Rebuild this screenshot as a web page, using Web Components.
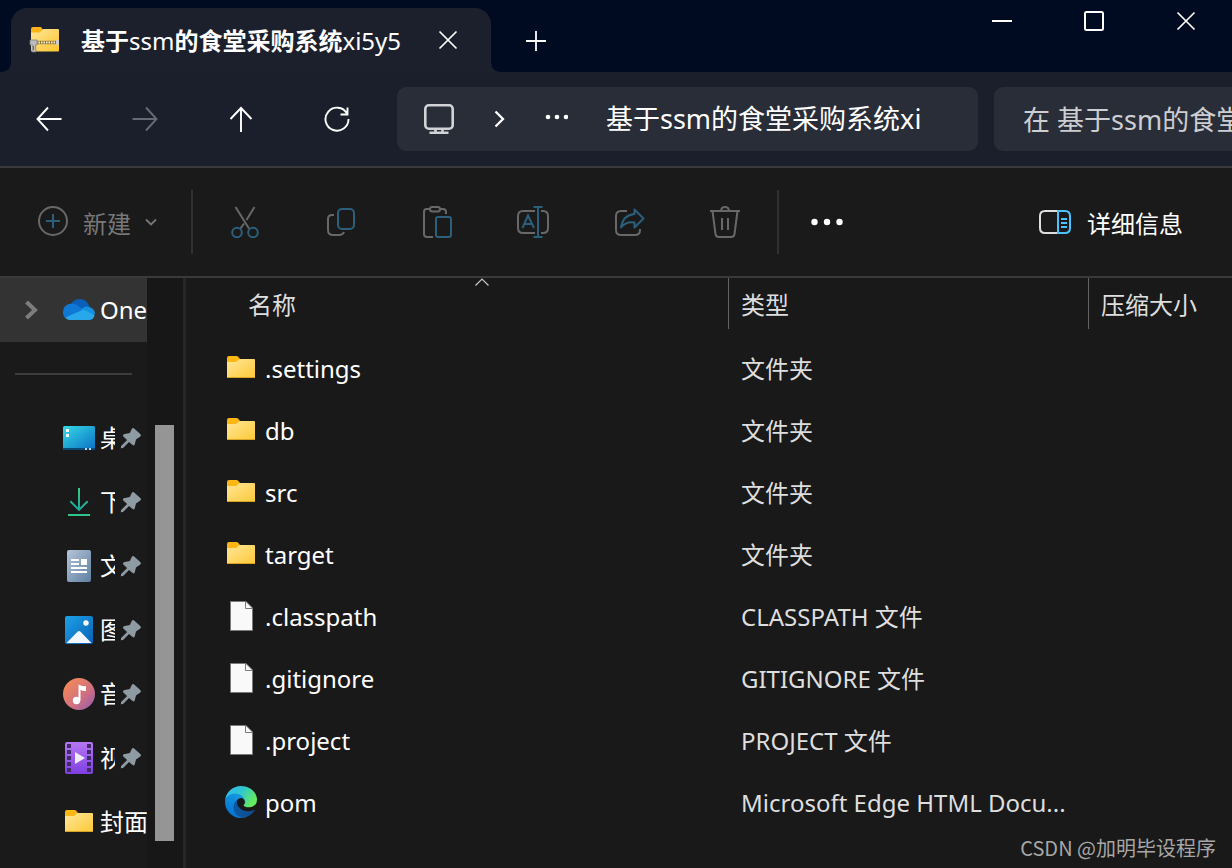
<!DOCTYPE html>
<html lang="zh-CN">
<head>
<meta charset="utf-8">
<title>基于ssm的食堂采购系统xi5y5</title>
<style>
  body {
    margin: 0;
    background: #191919;
    color: #fff;
    font-family: "Noto Sans", "Noto Sans CJK SC", sans-serif;
    font-size: 24px;
    line-height: 32px;
  }
</style>
</head>
<body>
<file-explorer></file-explorer>

<script>
const ICONS = {
  zip: [32, 32, `
    <defs><linearGradient id="g" x1="0" y1="0" x2="1" y2="1"><stop offset="0" stop-color="#ffe69a"/><stop offset="1" stop-color="#fdc52f"/></linearGradient></defs>
    <path d="M2 5q0-2 2-2h8l2 3v4H2z" fill="#fbb317"/>
    <path d="M2 8.500h9l3-3.500h15q1 0 1 1v20.500q0 1-1 1H3q-1 0-1-1z" fill="url(#g)"/>
    <path d="M6 18.500H30" stroke="#8a7434" stroke-width="3.400"/>
    <path d="M7 18.500H29" stroke="#f8f0cf" stroke-width="2.200" stroke-dasharray="1.500 1"/>
    <path d="M1 16h7v5H6.500l.5 7H3l.5-7H1z" fill="#bdbdbd" stroke="#777" stroke-width=".7"/>
    <path d="M4.500 22v4" stroke="#6b6b6b" stroke-width="1"/>
    <path d="M27 16h3v5h-3z" fill="#ccc"/>`],
  close: [20, 20, `<path d="M1.500 1.500l17 17M18.500 1.500l-17 17" stroke="currentColor" stroke-width="1.700" fill="none"/>`],
  plus: [20, 20, `<path d="M10 0v20M0 10h20" stroke="currentColor" stroke-width="1.800"/>`],
  minimize: [20, 20, `<path d="M0 10h20" stroke="currentColor" stroke-width="2"/>`],
  maximize: [20, 20, `<rect x="1" y="1" width="18" height="18" rx="1.500" stroke="currentColor" stroke-width="2" fill="none"/>`],
  back: [28, 28, `<path d="M26.500 14H3M13 2.500L2.500 14 13 25.500" stroke="currentColor" stroke-width="1.900" fill="none"/>`],
  forward: [28, 28, `<path d="M1.500 14H25M15 2.500l10.500 11.500L15 25.500" stroke="currentColor" stroke-width="1.900" fill="none"/>`],
  up: [28, 28, `<path d="M14 27V3M3.500 14L14 3 24.500 14" stroke="currentColor" stroke-width="1.900" fill="none"/>`],
  refresh: [28, 28, `<path d="M24 8.500A11.500 11.500 0 1 0 25.500 14M24.500 2.500v7H17.500" stroke="currentColor" stroke-width="1.900" fill="none"/>`],
  monitor: [30, 30, `<g fill="none" stroke="#d2d3d6" stroke-width="2.600"><rect x="1.300" y="1.300" width="27.400" height="23.400" rx="3.500"/><path d="M11.500 25v3.500M18.500 25v3.500M5.500 28.700h19"/></g>`],
  next: [14, 20, `<path d="M3.500 2.500L11 10l-7.500 7.500" stroke="currentColor" stroke-width="2.300" fill="none"/>`],
  dots: [24, 24, `<g fill="currentColor"><circle cx="4" cy="10" r="2.300"/><circle cx="13" cy="10" r="2.300"/><circle cx="22" cy="10" r="2.300"/></g>`],
  more: [32, 32, `<g fill="currentColor"><circle cx="3.500" cy="16" r="3.200"/><circle cx="16" cy="16" r="3.200"/><circle cx="28.500" cy="16" r="3.200"/></g>`],
  add: [32, 32, `<circle cx="16" cy="15" r="14" fill="none" stroke="#686868" stroke-width="2"/><path d="M16 8v14M9 15h14" stroke="#2b5f7c" stroke-width="2"/>`],
  down: [12, 12, `<path d="M1 3.500l5 5 5-5" stroke="currentColor" stroke-width="1.800" fill="none"/>`],
  cut: [32, 32, `
    <path d="M6.500 1l13.500 21.500M25.500 1L17.500 14M15 17.500L11.500 22.500" stroke="#686868" stroke-width="2" fill="none"/>
    <g fill="none" stroke="#2b5f7c" stroke-width="2"><circle cx="8" cy="26.500" r="4.800"/><circle cx="24" cy="26.500" r="4.800"/></g>`],
  copy: [32, 32, `
    <path d="M9 9H7Q3 9 3 13v11q0 5 5 5h6q4 0 5-3" stroke="#686868" stroke-width="2" fill="none"/>
    <rect x="13" y="3" width="16" height="20" rx="4" stroke="#2b5f7c" stroke-width="2" fill="none"/>`],
  paste: [32, 32, `
    <g fill="none" stroke="#686868" stroke-width="2"><path d="M9 3H5.500Q3 3 3 6v22q0 3 3 3h6M19 3h3q3 0 3 3v2"/><rect x="9" y="1" width="10" height="4.500" rx="2.200"/></g>
    <rect x="15" y="11" width="15" height="20" rx="2" stroke="#2b5f7c" stroke-width="2" fill="none"/>`],
  rename: [32, 32, `
    <path d="M18 5H6Q1 5 1 10v12q0 5 5 5h12M24 5h2q5 0 5 5v12q0 5-5 5h-2" stroke="#686868" stroke-width="2" fill="none"/>
    <path d="M16.500 1h9M16.500 31h9M21 1v30M5.500 22L11 9.500 17 22M7.500 18h7.500" stroke="#2b5f7c" stroke-width="2" fill="none"/>`],
  share: [32, 32, `
    <path d="M14 5H8Q3 5 3 10v14q0 5 5 5h14q5 0 5-5v-1" stroke="#686868" stroke-width="2" fill="none"/>
    <path d="M21.500 3.500L30.500 12.500 21.500 21.500V16.500Q13 15 8 21.500 10 9 21.500 8z" stroke="#2b5f7c" stroke-width="2" stroke-linejoin="round" fill="none"/>`],
  trash: [32, 32, `<g fill="none" stroke="#686868" stroke-width="2"><path d="M1 5h30M3.500 5l3 23q.5 3 3.500 3h12q3 0 3.500-3l3-23M12 4.500Q12.500 1 16 1t4 3.500M13 12v12M19 12v12"/></g>`],
  details: [32, 32, `
    <path d="M18 5H6Q1 5 1 10v12q0 5 5 5h12" stroke="#dedede" stroke-width="2" fill="none"/>
    <path d="M19 5h7q5 0 5 5v12q0 5-5 5h-7zM22 13h6M22 17h6M22 21h6" stroke="#4cc2ff" stroke-width="2" fill="none"/>`],
  expand: [32, 32, `<path d="M11.500 8L20 16l-8.500 8" stroke="#7d7d7d" stroke-width="4" fill="none"/>`],
  caret: [14, 10, `<path d="M.5 7.500L7 1l6.500 6.500" stroke="#c8c8c8" stroke-width="1.200" fill="none"/>`],
  pin: [22, 22, `<path d="M12 1.500q1-1 2.200 0l6.300 5.800q1 1.200-.2 2.200L16 12.500l-1.300 5q-.7 1.500-2 .6L9 15l-6 6-2.200.3.3-2.300 6-6L3.300 9.500q-1-1.500.5-2.200L9.800 6z" fill="#8f9ba3"/>`],
  onedrive: [32, 32, `
    <path d="M7 13Q9 5 17 5q7 0 9.500 8L17 20z" fill="#0a5fb8"/>
    <path d="M0 18.500Q0 10 9 9.500q4 0 7 3l6 3.500-15 9.500Q0 25 0 18.500z" fill="#0f78d4"/>
    <path d="M16.500 18l4-4.500q3-1.500 6-.5Q32 15 32 20l-4 3z" fill="#1490df"/>
    <path d="M2.500 23.500L20.500 15.500 31.500 21Q31 26 25.500 26H7q-3 0-4.500-2.500z" fill="#28a8ea"/>`],
  desktop: [32, 32, `
    <defs><linearGradient id="g" x1="0" y1="0" x2="1" y2="1"><stop offset="0" stop-color="#35dbe6"/><stop offset="1" stop-color="#0b6fc4"/></linearGradient></defs>
    <rect y="4" width="32" height="24" rx="1.500" fill="url(#g)"/>
    <path d="M0 26h32v.5q0 1.500-1.500 1.500h-29Q0 28 0 26.500z" fill="#0a4a74"/>
    <path d="M3 7h3v3H3zM3 12h3v3H3z" fill="#fff"/><path d="M22 26h2v2h-2zM26 26h2v2h-2z" fill="#c6d6e4"/>`],
  download: [32, 32, `
    <defs><linearGradient id="g" x1="0" y1="0" x2="0" y2="1"><stop offset="0" stop-color="#3acb85"/><stop offset="1" stop-color="#17a99a"/></linearGradient></defs>
    <path d="M15 2h2v19.500l7-7 1.300 1.500-9.300 9.300L6.700 16 8 14.500l7 7z" fill="url(#g)"/><path d="M5 28h22v2H5z" fill="#2fc48a"/>`],
  docs: [32, 32, `
    <defs><linearGradient id="g" x1="0" y1="0" x2="1" y2="1"><stop offset="0" stop-color="#b4c5d9"/><stop offset="1" stop-color="#5f7f9f"/></linearGradient></defs>
    <rect x="4" width="24" height="32" rx="2" fill="url(#g)"/>
    <path d="M8 9h8v2H8zM8 13h8v2H8zM18 9h6v6h-6zM8 17h16v2H8zM8 21h16v2H8z" fill="#fff"/>`],
  pictures: [32, 32, `
    <defs><linearGradient id="g" x1="0" y1="0" x2="1" y2="1"><stop offset="0" stop-color="#1ca2e8"/><stop offset="1" stop-color="#0a5fb4"/></linearGradient></defs>
    <rect x="2" y="2" width="28" height="28" rx="2" fill="url(#g)"/>
    <path d="M3.500 29L14.500 17.700q1.500-1.300 3 0L28.500 29z" fill="#f1f7fd"/><circle cx="23" cy="9" r="2.700" fill="#fff"/>`],
  music: [32, 32, `
    <defs><linearGradient id="g" x1="0" y1="0" x2="1" y2="1"><stop offset=".1" stop-color="#f28b58"/><stop offset=".6" stop-color="#d06f80"/><stop offset="1" stop-color="#8d5bb5"/></linearGradient></defs>
    <circle cx="16" cy="16" r="16" fill="url(#g)"/>
    <circle cx="13.500" cy="22.500" r="3.700" fill="#fff"/><path d="M15.500 6.500q4 2.500 7.500 1.500v5q-3 .5-5.500-1.300V22.500h-2z" fill="#fff"/>`],
  video: [32, 32, `
    <defs><linearGradient id="g" x1="0" y1="0" x2="0" y2="1"><stop offset="0" stop-color="#b677f5"/><stop offset="1" stop-color="#7f3fe0"/></linearGradient></defs>
    <rect x="2" width="28" height="32" rx="2" fill="url(#g)"/>
    <path d="M6 2v28M26 2v28" stroke="#402a68" stroke-width="4" stroke-dasharray="4 2"/>
    <path d="M12 10l10 6-10 6z" fill="#f0ecf5"/>`],
  folder: [32, 32, `
    <defs><linearGradient id="g" x1="0" y1="0" x2="1" y2="1"><stop offset="0" stop-color="#ffe699"/><stop offset="1" stop-color="#fdc936"/></linearGradient></defs>
    <path d="M2 6q0-2 2-2h7.500q1 0 1.700.8L15 7v4H2z" fill="#fdb714"/>
    <path d="M2 10h9l3.500-3H29q1 0 1 1v17q0 1-1 1H3q-1 0-1-1z" fill="url(#g)"/>
    <path d="M2.500 25.500h27" stroke="#dba324" stroke-width="1"/>`],
  file: [32, 32, `<path d="M5.500 1.500h15.500l6.500 6.500v22.500H5.500z" fill="#f9f9f9" stroke="#7a7a7a" stroke-width="1"/><path d="M20.500 1.500v7h7" fill="none" stroke="#7a7a7a" stroke-width="1"/>`],
  edge: [256, 256, `
    <defs>
      <linearGradient id="a" x1="0" x2="1"><stop offset="0" stop-color="#0c59a4"/><stop offset="1" stop-color="#114a8b"/></linearGradient>
      <linearGradient id="b" x1=".8" y1="0" x2=".3" y2="1"><stop offset="0" stop-color="#1b9de2"/><stop offset="1" stop-color="#0072d0"/></linearGradient>
      <linearGradient id="c" x1="0" y1="0" x2="1" y2=".5"><stop offset="0" stop-color="#35b8f5"/><stop offset=".5" stop-color="#2dc6cf"/><stop offset="1" stop-color="#66eb5e"/></linearGradient>
    </defs>
    <path fill="url(#a)" d="M231 190.500c-3.400 1.800-6.900 3.400-10.500 4.700a101.500 101.500 0 0 1-35.900 6.400c-47.300 0-88.500-32.500-88.500-74.300 0-11.400 6.400-21.900 16.400-27.300-42.800 1.800-53.800 46.400-53.800 72.500 0 74 68.100 81.400 82.800 81.400 7.900 0 19.800-2.300 27-4.600l1.300-.4a128.300 128.300 0 0 0 66.600-52.800 4 4 0 0 0-5.400-5.600z"/>
    <path fill="url(#b)" d="M105.700 241.400a79.200 79.200 0 0 1-22.700-21.300 80.700 80.700 0 0 1 29.500-120c3.100-1.500 8.500-4.200 15.600-4a32.400 32.400 0 0 1 25.700 13 31.900 31.900 0 0 1 6.300 18.700c0-.2 24.500-79.600-80-79.600-43.900 0-80 41.700-80 78.200a130.200 130.200 0 0 0 12.100 56 128 128 0 0 0 156.400 67 75.500 75.500 0 0 1-62.800-8z"/>
    <path fill="url(#c)" d="M152.300 148.900c-.8 1-3.300 2.500-3.300 5.700 0 2.600 1.700 5.100 4.700 7.200 14.400 10 41.500 8.700 41.600 8.700a59.600 59.600 0 0 0 30.300-8.300 61.400 61.400 0 0 0 30.400-52.900c.3-22.400-8-37.300-11.300-43.900C223.500 23.900 177.700 0 128 0A128 128 0 0 0 0 126.200c.5-36.500 36.800-66 80-66 3.500 0 23.500.3 42 10a72.600 72.600 0 0 1 30.900 29.300c6.100 10.600 7.200 24.100 7.200 29.500s-2.700 13.300-7.800 19.900z"/>`],
};

class UiIcon extends HTMLElement {
  constructor() {
    super();
    this.attachShadow({ mode: "open" });
  }

  connectedCallback() {
    const [w, h, body] = ICONS[this.getAttribute("name")];
    const width = Number(this.getAttribute("size")) || w;
    const height = Math.round((width * h) / w);
    this.shadowRoot.innerHTML = `
      <style>
        :host { display: block; flex: none; }
        svg { display: block; }
      </style>
      <svg width="${width}" height="${height}" viewBox="0 0 ${w} ${h}" aria-hidden="true">${body}</svg>
    `;
  }
}

// Plain borderless button with an icon (and optional label) slotted in
class IconButton extends HTMLElement {
  constructor() {
    super();
    this.attachShadow({ mode: "open" });
  }

  connectedCallback() {
    const label = this.getAttribute("label");
    this.shadowRoot.innerHTML = `
      <style>
        :host { display: flex; flex: none; }
        button {
          flex: 1;
          display: flex;
          align-items: center;
          justify-content: center;
          gap: var(--button-gap, 16px);
          padding: 0;
          border: 0;
          background: none;
          color: inherit;
          font: inherit;
          white-space: nowrap;
        }
      </style>
      <button type="button" ${label ? `aria-label="${label}"` : ""} ${this.hasAttribute("disabled") ? "disabled" : ""}><slot></slot></button>
    `;
  }
}

class TitleBar extends HTMLElement {
  constructor() {
    super();
    this.attachShadow({ mode: "open" });
  }

  connectedCallback() {
    this.shadowRoot.innerHTML = `
      <style>
        :host {
          display: flex;
          height: 72px;
          background: #000a20;
        }
        .tab {
          position: relative;
          display: flex;
          align-items: center;
          box-sizing: border-box;
          width: 480px;
          margin: 8px 0 0 11px;
          padding: 0 33px 0 18px;
          border-radius: 16px 16px 0 0;
          background: #1b202c;
        }
        /* concave feet where the tab meets the bar below */
        .tab::before,
        .tab::after {
          content: "";
          position: absolute;
          bottom: 0;
          width: 8px;
          height: 8px;
        }
        .tab::before {
          right: 100%;
          background: radial-gradient(circle at 0 0, transparent 7px, #1b202c 8px);
        }
        .tab::after {
          left: 100%;
          background: radial-gradient(circle at 100% 0, transparent 7px, #1b202c 8px);
        }
        .title {
          flex: 1;
          margin-left: 20px;
          padding-top: 2px;
          white-space: nowrap;
        }
        .add { width: 90px; padding-top: 10px; }
        .controls { display: flex; margin-left: auto; height: 42px; }
        .controls icon-button { width: 92px; }
      </style>
      <div class="tab">
        <ui-icon name="zip"></ui-icon>
        <span class="title"><b>基于</b>ssm<b>的食堂采购系统</b>xi5y5</span>
        <icon-button label="关闭选项卡"><ui-icon name="close"></ui-icon></icon-button>
      </div>
      <icon-button class="add" label="新建选项卡"><ui-icon name="plus"></ui-icon></icon-button>
      <div class="controls">
        <icon-button label="最小化"><ui-icon name="minimize"></ui-icon></icon-button>
        <icon-button label="最大化"><ui-icon name="maximize"></ui-icon></icon-button>
        <icon-button label="关闭"><ui-icon name="close"></ui-icon></icon-button>
      </div>
    `;
  }
}

class AddressBar extends HTMLElement {
  constructor() {
    super();
    this.attachShadow({ mode: "open" });
  }

  connectedCallback() {
    this.shadowRoot.innerHTML = `
      <style>
        :host {
          display: flex;
          align-items: center;
          padding: 15px 0;
          background: #1b1f2b;
          border-bottom: 2px solid #3a3a3d;
          font-size: 27px;
          line-height: 40px;
        }
        .nav {
          display: flex;
          box-sizing: border-box;
          width: 397px;
          padding-left: 1px;
        }
        .nav icon-button { width: 96px; }
        .nav [disabled] { color: #676a73; }
        .path {
          flex: 1;
          min-width: 0;
          display: flex;
          align-items: center;
          gap: 38px;
          box-sizing: border-box;
          height: 64px;
          margin-right: 16px;
          padding: 0 27px;
          border-radius: 9px;
          background: #292d38;
        }
        a { color: inherit; text-decoration: none; white-space: nowrap; }
        input {
          box-sizing: border-box;
          width: 238px;
          height: 64px;
          padding: 0 0 0 29px;
          border: 0;
          border-radius: 9px 0 0 9px;
          background: #292d38;
          color: #fff;
          font: inherit;
        }
        input::placeholder { color: #ccced1; opacity: 1; }
      </style>
      <div class="nav">
        <icon-button label="后退"><ui-icon name="back"></ui-icon></icon-button>
        <icon-button label="前进" disabled><ui-icon name="forward"></ui-icon></icon-button>
        <icon-button label="向上"><ui-icon name="up"></ui-icon></icon-button>
        <icon-button label="刷新"><ui-icon name="refresh"></ui-icon></icon-button>
      </div>
      <nav class="path">
        <ui-icon name="monitor"></ui-icon>
        <ui-icon name="next"></ui-icon>
        <icon-button label="更多路径"><ui-icon name="dots"></ui-icon></icon-button>
        <a href="#">基于ssm的食堂采购系统xi</a>
      </nav>
      <input type="text" aria-label="搜索" placeholder="在 基于ssm的食堂">
    `;
  }
}

class CommandBar extends HTMLElement {
  constructor() {
    super();
    this.attachShadow({ mode: "open" });
  }

  connectedCallback() {
    const commands = [
      ["cut", "剪切"],
      ["copy", "复制"],
      ["paste", "粘贴"],
      ["rename", "重命名"],
      ["share", "共享"],
      ["trash", "删除"],
    ];
    this.shadowRoot.innerHTML = `
      <style>
        :host {
          display: flex;
          align-items: center;
          height: 108px;
          padding: 0 49px 0 36px;
          background: #1a1a1a;
          border-bottom: 2px solid #3a3a3a;
        }
        span { padding-top: 3px; }
        .new { --button-gap: 14px; width: 122px; margin-right: 33px; color: #777; }
        .group {
          display: flex;
          padding: 0 4px;
          border: solid #303030;
          border-width: 0 2px;
        }
        .group icon-button { width: 96px; height: 64px; }
        .more { width: 96px; }
        .details { margin-left: auto; }
      </style>
      <icon-button class="new" disabled><ui-icon name="add"></ui-icon><span>新建</span><ui-icon name="down"></ui-icon></icon-button>
      <div class="group">
        ${commands.map(([icon, label]) => `<icon-button label="${label}" disabled><ui-icon name="${icon}"></ui-icon></icon-button>`).join("")}
      </div>
      <icon-button class="more" label="查看更多"><ui-icon name="more"></ui-icon></icon-button>
      <icon-button class="details"><ui-icon name="details"></ui-icon><span>详细信息</span></icon-button>
    `;
  }
}

class SideItem extends HTMLElement {
  constructor() {
    super();
    this.attachShadow({ mode: "open" });
  }

  connectedCallback() {
    this.shadowRoot.innerHTML = `
      <style>
        :host { display: block; }
        a {
          display: flex;
          align-items: center;
          height: 64px;
          color: inherit;
          text-decoration: none;
        }
        :host([selected]) a { background: #333; }
        .expander { flex: none; width: 32px; padding: 0 16px 0 15px; }
        .label {
          flex: 1;
          min-width: 0;
          margin-left: 5px;
          overflow: hidden;
          white-space: nowrap;
        }
        .pin { margin: 0 5px; }
      </style>
      <a href="#">
        <span class="expander">${this.hasAttribute("selected") ? `<ui-icon name="expand"></ui-icon>` : ""}</span>
        <ui-icon name="${this.getAttribute("icon")}"></ui-icon>
        <span class="label"><slot></slot></span>
        ${this.hasAttribute("pinned") ? `<ui-icon class="pin" name="pin"></ui-icon>` : ""}
      </a>
    `;
  }
}

class SideNav extends HTMLElement {
  constructor() {
    super();
    this.attachShadow({ mode: "open" });
  }

  connectedCallback() {
    this.shadowRoot.innerHTML = `
      <style>
        :host {
          display: flex;
          width: 183px;
          background: #171717;
          border-right: 3px solid #272727;
        }
        nav { width: 147px; background: #1a1a1a; }
        hr {
          height: 2px;
          margin: 31px 15px;
          border: 0;
          background: #3d3d3d;
        }
        .track { flex: 1; display: flex; padding: 147px 9px 27px 8px; }
        .thumb { flex: 1; background: #959595; }
      </style>
      <nav>
        <side-item icon="onedrive" selected>One</side-item>
        <hr>
        <side-item icon="desktop" pinned>桌</side-item>
        <side-item icon="download" pinned>下</side-item>
        <side-item icon="docs" pinned>文</side-item>
        <side-item icon="pictures" pinned>图</side-item>
        <side-item icon="music" pinned>音</side-item>
        <side-item icon="video" pinned>视</side-item>
        <side-item icon="folder">封面</side-item>
      </nav>
      <div class="track"><div class="thumb"></div></div>
    `;
  }
}

class FileList extends HTMLElement {
  constructor() {
    super();
    this.attachShadow({ mode: "open" });
  }

  connectedCallback() {
    const files = [
      ["folder", ".settings", "文件夹"],
      ["folder", "db", "文件夹"],
      ["folder", "src", "文件夹"],
      ["folder", "target", "文件夹"],
      ["file", ".classpath", "CLASSPATH 文件"],
      ["file", ".gitignore", "GITIGNORE 文件"],
      ["file", ".project", "PROJECT 文件"],
      ["edge", "pom", "Microsoft Edge HTML Docu..."],
    ];
    this.shadowRoot.innerHTML = `
      <style>
        :host { display: block; min-width: 0; }
        table {
          width: 100%;
          table-layout: fixed;
          border-collapse: collapse;
        }
        .name { width: 542px; }
        .type { width: 360px; }
        th {
          position: relative;
          height: 60px;
          padding: 0;
          color: #dedede;
          font-weight: 400;
          text-align: left;
          vertical-align: top;
        }
        th div {
          box-sizing: border-box;
          height: 51px;
          padding: 11px 0 0 12px;
          border-left: 1px solid #636363;
        }
        th:first-child div { padding-left: 62px; border: 0; }
        th ui-icon {
          position: absolute;
          top: 0;
          left: calc(50% + 18px);
        }
        td {
          height: 62px;
          padding: 0 0 0 13px;
          color: #dedede;
          white-space: nowrap;
        }
        td:first-child { padding-left: 39px; color: #fff; }
        .file { display: flex; align-items: center; gap: 8px; }
        .file ui-icon { margin-bottom: 2px; }
      </style>
      <table>
        <colgroup><col class="name"><col class="type"><col></colgroup>
        <thead>
          <tr>
            <th><div>名称</div><ui-icon name="caret"></ui-icon></th>
            <th><div>类型</div></th>
            <th><div>压缩大小</div></th>
          </tr>
        </thead>
        <tbody>
          ${files.map(([icon, name, type]) => `
            <tr>
              <td><div class="file"><ui-icon name="${icon}" size="32"></ui-icon>${name}</div></td>
              <td>${type}</td>
              <td></td>
            </tr>`).join("")}
        </tbody>
      </table>
    `;
  }
}

class FileExplorer extends HTMLElement {
  constructor() {
    super();
    this.attachShadow({ mode: "open" });
  }

  connectedCallback() {
    this.shadowRoot.innerHTML = `
      <style>
        :host {
          position: relative;
          display: flex;
          flex-direction: column;
          min-height: 100vh;
          overflow: hidden;
        }
        main { flex: 1; display: flex; }
        file-list { flex: 1; }
        .mark {
          position: absolute;
          right: 16px;
          bottom: 4px;
          color: #a6a6a6;
          font-family: "Noto Sans CJK SC", sans-serif;
          font-size: 20px;
        }
      </style>
      <title-bar></title-bar>
      <address-bar></address-bar>
      <command-bar></command-bar>
      <main>
        <side-nav></side-nav>
        <file-list></file-list>
      </main>
      <span class="mark">CSDN @加明毕设程序</span>
    `;
  }
}

customElements.define("ui-icon", UiIcon);
customElements.define("icon-button", IconButton);
customElements.define("title-bar", TitleBar);
customElements.define("address-bar", AddressBar);
customElements.define("command-bar", CommandBar);
customElements.define("side-item", SideItem);
customElements.define("side-nav", SideNav);
customElements.define("file-list", FileList);
customElements.define("file-explorer", FileExplorer);
</script>
</body>
</html>
